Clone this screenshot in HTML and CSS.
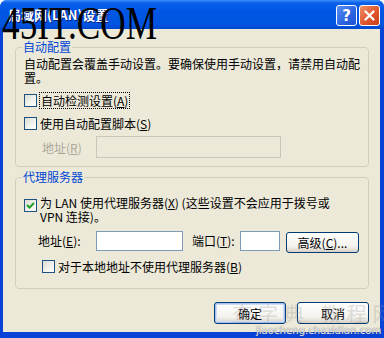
FILE: index.html
```html
<!DOCTYPE html>
<html lang="zh-CN">
<head>
  <meta charset="UTF-8" />
  <title>局域网(LAN)设置</title>
  <link rel="stylesheet" href="styles.css">
</head>
<body>
  <div class="window">
    <div class="titlebar">
      <span class="title">局域网(LAN)设置</span>
      <div class="title-buttons">
        <span class="tb help">?</span>
        <span class="tb close">
          <svg width="11" height="11" viewBox="0 0 11 11"><path d="M1.5 1.5 L9.5 9.5 M9.5 1.5 L1.5 9.5" stroke="#fff" stroke-width="2.2" stroke-linecap="round"/></svg>
        </span>
      </div>
    </div>

    <div class="client">
      <fieldset class="group group-auto">
        <legend>自动配置</legend>
        <p class="note">自动配置会覆盖手动设置。要确保使用手动设置，请禁用自动配<br>置。</p>
        <label class="check row-detect"><span class="box"></span><span class="focus">自动检测设置(<u>A</u>)</span></label>
        <label class="check row-script"><span class="box"></span><span>使用自动配置脚本(<u>S</u>)</span></label>
        <div class="field-row disabled">
          <span class="field-label">地址(<u>R</u>)</span>
          <span class="edit edit-script"></span>
        </div>
      </fieldset>

      <fieldset class="group group-proxy">
        <legend>代理服务器</legend>
        <label class="check row-proxy">
          <span class="box checked">
            <svg width="11" height="11" viewBox="0 0 11 11"><path d="M2 5 L4.5 7.5 L9 3" fill="none" stroke="#21a121" stroke-width="2"/></svg>
          </span>
          <span class="proxy-text">为 LAN 使用代理服务器(<u>X</u>) (这些设置不会应用于拨号或<br>VPN 连接)。</span>
        </label>
        <div class="field-row proxy-row">
          <span class="field-label addr">地址(<u>E</u>):</span>
          <span class="edit edit-addr"></span>
          <span class="field-label port">端口(<u>T</u>):</span>
          <span class="edit edit-port"></span>
          <button class="btn btn-adv">高级(<u>C</u>)...</button>
        </div>
        <label class="check row-bypass"><span class="box"></span><span>对于本地地址不使用代理服务器(<u>B</u>)</span></label>
      </fieldset>

      <div class="actions">
        <button class="btn default">确定</button>
        <button class="btn">取消</button>
      </div>
    </div>

    <div class="mark">45IT.COM</div>
    <div class="mark-cn">查字典 教程网</div>
    <div class="mark-url">jiaocheng.chazidian.com</div>
  </div>
</body>
</html>
```

FILE: styles.css
```css
* {
  box-sizing: border-box;
}

body {
  margin: 0;
  background: #fff;
  font-family: "Noto Sans CJK SC", "Noto Sans", sans-serif;
  font-size: 12px;
  color: #000;
}

.window {
  position: relative;
  width: 384px;
  height: 338px;
  background: #0842d6;
  border-radius: 7px 7px 0 0;
  overflow: hidden;
  display: flex;
  flex-direction: column;
  padding: 0 4px 6px 3px;
}

/* 标题栏 */
.titlebar {
  height: 29px;
  margin: 0 -4px 0 -3px;
  padding: 0 4px 0 8px;
  display: flex;
  align-items: center;
  justify-content: space-between;
  background: linear-gradient(#3d8ff7 0, #0a60ea 3px, #0056e3 40%, #0054e0 85%, #0047cf 100%);
}

.title {
  color: #fff;
  font-weight: bold;
  font-size: 13px;
  text-shadow: 1px 1px 0 #0a1f80;
}

.title-buttons {
  display: flex;
  gap: 2px;
  padding-top: 2px;
}

.tb {
  width: 21px;
  height: 21px;
  border: 1px solid #fff;
  border-radius: 3px;
  display: flex;
  align-items: center;
  justify-content: center;
}

.help {
  background: linear-gradient(135deg, #5a8ef5, #2a63e0 60%, #1f52cf);
  color: #fff;
  font: bold 15px "DejaVu Sans", sans-serif;
}

.close {
  background: linear-gradient(135deg, #f0906a, #e0562e 55%, #c8411c);
}

/* 客户区 */
.client {
  flex: 1;
  background: #ece9d8;
  padding: 11px 11px 0 12px;
  display: flex;
  flex-direction: column;
}

.group {
  margin: 0;
  border: 1px solid #d0d0bf;
  border-radius: 4px;
  padding: 3px 8px 8px 8px;
  min-width: 0;
}

.group legend {
  color: #0046d5;
  padding: 0 1px;
  margin-left: -2px;
  line-height: 14px;
}

.note {
  margin: 0;
  line-height: 14px;
}

.check {
  display: flex;
  align-items: center;
  gap: 3px;
  line-height: 15px;
}

.box {
  flex: none;
  width: 13px;
  height: 13px;
  border: 1px solid #1c5180;
  background: linear-gradient(135deg, #dcdcd4, #f4f4f0 60%, #fff);
  display: flex;
  align-items: center;
  justify-content: center;
}

.focus {
  outline: 1px dotted #000;
  padding: 0 1px;
}

.row-detect {
  margin-top: 8px;
}

.row-script {
  margin-top: 8px;
}

.field-row {
  display: flex;
  align-items: center;
}

.disabled {
  margin-top: 5px;
  padding-left: 18px;
  color: #aca899;
}

.disabled .field-label {
  width: 54px;
}

.edit {
  display: block;
  height: 20px;
  background: #fff;
  border: 1px solid #7f9db9;
}

.edit-script {
  width: 185px;
  height: 22px;
  background: #ece9d8;
  border-color: #c9c7ba;
}

.group-proxy {
  margin-top: 3px;
  padding-bottom: 14px;
}

.row-proxy {
  margin-top: 9px;
  align-items: flex-start;
  gap: 3px;
}

.row-proxy .box {
  margin-top: 3px;
}

.proxy-text {
  line-height: 14px;
}

.proxy-row {
  margin-top: 7px;
  padding-left: 14px;
  align-items: flex-start;
}

.proxy-row .field-label {
  line-height: 20px;
}

.addr {
  width: 58px;
}

.edit-addr {
  width: 87px;
}

.port {
  width: 48px;
  margin-left: 9px;
}

.edit-port {
  width: 40px;
}

.row-bypass {
  margin-top: 6px;
  padding-left: 18px;
}

/* 按钮 */
.btn {
  font-family: "Noto Sans CJK SC", "Noto Sans", sans-serif;
  font-size: 12px;
  color: #000;
  height: 22px;
  padding: 0;
  border: 1px solid #003c74;
  border-radius: 3px;
  background: linear-gradient(#ffffff, #f4f3ee 70%, #d6d0c5);
}

.btn-adv {
  width: 73px;
  height: 21px;
  margin: 1px 0 0 6px;
}

.default {
  box-shadow: inset 0 0 0 1px #a6c1f0, inset 0 0 0 2px #cfdcf6;
}

.actions {
  margin-top: 13px;
  display: flex;
  justify-content: flex-end;
  gap: 11px;
}

.actions .btn {
  width: 72px;
}

/* 水印 */
.mark {
  position: absolute;
  left: 2px;
  top: -4px;
  font: 47px "Liberation Serif", serif;
  color: #000;
  transform: scaleX(0.75);
  transform-origin: left top;
  white-space: nowrap;
}

.mark-cn {
  position: absolute;
  left: 232px;
  top: 299px;
  font-size: 20px;
  color: rgba(150, 150, 150, 0.3);
  letter-spacing: 6px;
  white-space: nowrap;
}

.mark-url {
  position: absolute;
  left: 256px;
  top: 324px;
  font: 11px "DejaVu Sans", sans-serif;
  color: #e4e4e4;
  text-shadow: 0 0 1px #666;
  transform: scaleX(0.92);
  transform-origin: left top;
  white-space: nowrap;
}
```
